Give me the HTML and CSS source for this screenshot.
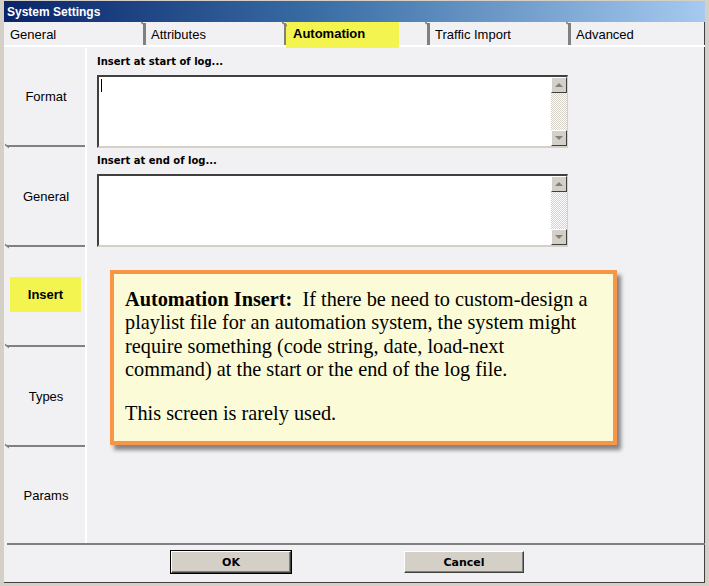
FILE: index.html
```html
<!DOCTYPE html>
<html lang="en">

<head>
    <meta charset="UTF-8">
    <title>System Settings</title>
    <link rel="stylesheet" href="styles.css">
</head>

<body>
    <div class="window">
        <div class="titlebar">System Settings</div>

        <nav class="tabs">
            <div class="tab first">General</div>
            <div class="tab">Attributes</div>
            <div class="tab active"><span class="mark">Automation</span></div>
            <div class="tab">Traffic Import</div>
            <div class="tab last">Advanced</div>
        </nav>

        <div class="main">
            <aside class="side">
                <div class="vtab">Format</div>
                <div class="vtab">General</div>
                <div class="vtab current"><span class="mark">Insert</span></div>
                <div class="vtab">Types</div>
                <div class="vtab">Params</div>
            </aside>

            <section class="content">
                <p class="label top">Insert at start of log...</p>
                <div class="memo">
                    <div class="memo-text"><span class="caret"></span></div>
                    <div class="scroll">
                        <div class="arrow up"></div>
                        <div class="track"></div>
                        <div class="arrow down"></div>
                    </div>
                </div>

                <p class="label">Insert at end of log...</p>
                <div class="memo">
                    <div class="memo-text"></div>
                    <div class="scroll">
                        <div class="arrow up"></div>
                        <div class="track"></div>
                        <div class="arrow down"></div>
                    </div>
                </div>

                <div class="note">
                    <p><b>Automation Insert:</b>&nbsp; If there be need to custom-design a<br>playlist file for an automation system, the system might<br>require something (code string, date, load-next<br>command) at the start or the end of the log file.</p>
                    <p>This screen is rarely used.</p>
                </div>
            </section>
        </div>

        <div class="footer">
            <button class="btn default">OK</button>
            <button class="btn">Cancel</button>
        </div>
    </div>
</body>

</html>
```

FILE: styles.css
```css
body {
    margin: 0;
    background: #f1f0f3;
    font-family: "Liberation Sans", Arial, sans-serif;
}

.window {
    width: 709px;
    height: 586px;
    box-sizing: border-box;
    background: #f1f0f3;
    border-top: 1px solid #d4d0c8;
    border-left: 4px solid #d4d0c8;
    border-right: 4px solid #d4d0c8;
    border-bottom: 3px solid #d4d0c8;
    box-shadow: inset -1px -1px 0 #404040, 1px 1px 0 #808080;
    display: flex;
    flex-direction: column;
}

.titlebar {
    height: 21px;
    line-height: 22px;
    padding-left: 3px;
    color: #fff;
    font-size: 12px;
    font-weight: bold;
    background: linear-gradient(to right, #0a246a, #3a6ea5 45%, #a6caf0);
}

/* top tabs */
.tabs {
    display: flex;
    height: 22px;
    margin-top: 1px;
    border-bottom: 2px solid #fff;
}

.tab {
    width: 141px;
    box-sizing: border-box;
    padding: 4px 0 0 5px;
    font-size: 13px;
    color: #000;
    border-left: 3px solid #808080;
    position: relative;
}

.tab::before {
    content: "";
    position: absolute;
    left: -5px;
    top: 0;
    width: 5px;
    height: 3px;
    border-top: 2px solid #808080;
    transform: skewY(35deg);
}

.tab.first {
    border-left: none;
    width: 139px;
    padding-left: 6px;
}

.tab.first::before {
    display: none;
}

.tab.last {
    flex: 1;
}

.tab.active {
    padding: 0;
    width: 143px;
}

.tab.active .mark {
    display: block;
    width: 113px;
    height: 26px;
    margin: -1px 0 0 -1px;
    padding: 4px 0 0 7px;
    box-sizing: border-box;
    background: #f4f450;
    font-weight: bold;
}

/* body */
.main {
    height: 496px;
    display: flex;
    padding: 1px 0 0 3px;
    box-sizing: border-box;
}

.side {
    width: 78px;
    border-right: 2px solid #fff;
    display: flex;
    flex-direction: column;
}

.vtab {
    height: 97px;
    flex: none;
    border-bottom: 2px solid #808080;
    margin-bottom: 1px;
    display: flex;
    align-items: center;
    justify-content: center;
    font-size: 13px;
    position: relative;
}

.vtab::after {
    content: "";
    position: absolute;
    left: -2px;
    bottom: -2px;
    width: 4px;
    height: 3px;
    border-bottom: 2px solid #808080;
    transform: skewY(35deg);
}

.vtab:last-child {
    flex: 1;
    border-bottom: none;
    margin-bottom: 0;
}

.vtab:last-child::after {
    display: none;
}

.vtab.current {
    align-items: flex-start;
}

.vtab.current .mark {
    display: block;
    width: 71px;
    height: 35px;
    margin: 29px 0 0 -1px;
    line-height: 35px;
    text-align: center;
    background: #f4f450;
    font-weight: bold;
}

.content {
    flex: 1;
    position: relative;
    padding-left: 10px;
}

.label {
    margin: 6px 0;
    line-height: 14px;
    font-family: "DejaVu Sans", sans-serif;
    font-size: 10px;
    font-weight: bold;
}

.label.top {
    margin-top: 7px;
}

.memo {
    width: 471px;
    height: 73px;
    box-sizing: border-box;
    display: flex;
    background: #fff;
    border-top: 2px solid #404040;
    border-left: 2px solid #404040;
    border-right: 1px solid #d4d0c8;
    border-bottom: 2px solid #d4d0c8;
}

.memo-text {
    flex: 1;
    padding: 2px 0 0 2px;
}

.caret {
    display: block;
    width: 1px;
    height: 13px;
    background: #000;
}

.scroll {
    width: 16px;
    display: flex;
    flex-direction: column;
}

.track {
    flex: 1;
    background: repeating-conic-gradient(#fff 0 25%, #d4d0c8 0 50%) 0 0 / 2px 2px;
}

.arrow {
    height: 16px;
    box-sizing: border-box;
    background: #d4d0c8;
    border-top: 1px solid #fff;
    border-left: 1px solid #fff;
    border-right: 1px solid #404040;
    border-bottom: 1px solid #404040;
    position: relative;
}

.arrow::after {
    content: "";
    position: absolute;
    left: 3px;
    top: 5px;
    border-left: 4px solid transparent;
    border-right: 4px solid transparent;
}

.arrow.up::after {
    border-bottom: 4px solid #808080;
}

.arrow.down::after {
    border-top: 4px solid #808080;
}

.note {
    position: absolute;
    left: 23px;
    top: 222px;
    width: 507px;
    height: 175px;
    box-sizing: border-box;
    padding: 14px 10px 0 11px;
    background: #fbfbd7;
    border: 4px solid #f79646;
    box-shadow: 4px 5px 4px rgba(0, 0, 0, 0.45);
    font-family: "Liberation Serif", "Times New Roman", serif;
    font-size: 20.3px;
    line-height: 23.3px;
    white-space: nowrap;
    color: #000;
}

.note p {
    margin: 0 0 21px;
}

.footer {
    flex: 1;
    display: flex;
    align-items: flex-start;
    padding: 6px 0 0 164px;
    gap: 113px;
    border-top: 2px solid #808080;
    margin-left: 3px;
}

.btn {
    width: 120px;
    height: 22px;
    font-family: "DejaVu Sans", sans-serif;
    font-size: 11px;
    font-weight: bold;
    background: #d4d0c8;
    border: 1px solid;
    border-color: #fff #404040 #404040 #fff;
    box-shadow: inset -1px -1px 0 #808080;
    padding: 0;
}

.btn.default {
    outline: 1px solid #000;
}
```
